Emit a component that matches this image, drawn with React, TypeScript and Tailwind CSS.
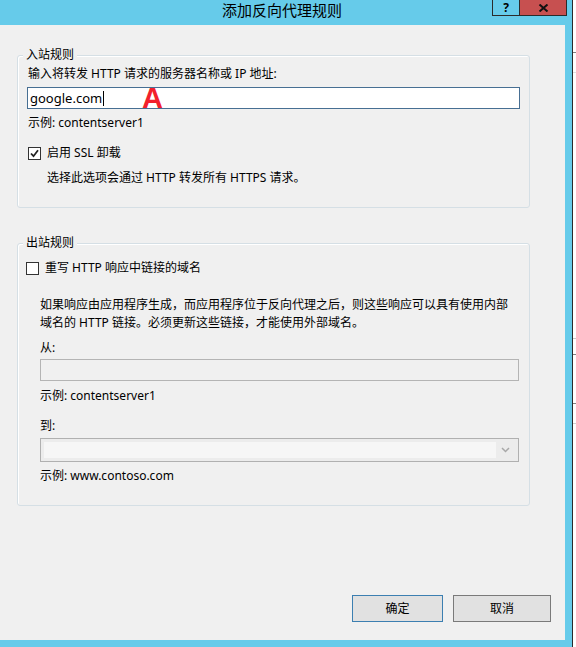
import React from "react";

const FONT = "font-['Segoe_UI','Noto_Sans','Noto_Sans_CJK_SC',sans-serif]";

function CheckBox({ checked = false }: { checked?: boolean }) {
  return (
    <span className="flex h-[13px] w-[13px] shrink-0 items-center justify-center border border-[#333333] bg-white">
      {checked && (
        <svg width="9" height="9" viewBox="0 0 9 9" aria-hidden>
          <path d="M1 4.5 L3.5 7.2 L8 1.2" fill="none" stroke="#222" strokeWidth="1.8" />
        </svg>
      )}
    </span>
  );
}

function GroupBox({
  title,
  className,
  children,
}: {
  title: string;
  className?: string;
  children: React.ReactNode;
}) {
  return (
    <div
      className={`relative ml-[17px] w-[513px] rounded-[3px] border border-[#d5dfe5] shadow-[inset_1px_1px_0_#ffffff] ${className ?? ""}`}
    >
      <span className="absolute -top-[9px] left-[5px] bg-[#f0f0f0] px-[3px] text-[12px] leading-[16px]">
        {title}
      </span>
      {children}
    </div>
  );
}

export default function App() {
  return (
    <div className={`relative flex h-[647px] w-[576px] overflow-hidden bg-white text-black ${FONT}`}>
      {/* dialog window */}
      <div className="flex h-full w-[572px] flex-col bg-[#66cbea]">
        <div className="relative flex h-[25px] items-center justify-center pb-[4px] pr-[8px] text-[15px]">
          添加反向代理规则
          <div className="absolute right-[5px] top-0 flex h-[16px] border border-t-0 border-[#2b2b2b]">
            <div className="flex w-[27px] items-center justify-center border-r border-[#2b2b2b] text-[12px] font-bold leading-none">
              ?
            </div>
            <div className="flex w-[46px] items-center justify-center bg-[#c75050]">
              <svg width="11" height="8" viewBox="0 0 11 8" aria-hidden>
                <path d="M1.5 0.5 L9.5 7.5 M9.5 0.5 L1.5 7.5" stroke="#111" strokeWidth="2" />
              </svg>
            </div>
          </div>
        </div>

        <div className="mb-[7px] mr-[7px] flex flex-1 flex-col bg-[#f0f0f0] text-[12px] leading-[16px]">
          {/* inbound rules */}
          <GroupBox title="入站规则" className="mt-[30px] pb-[21px] pl-[10px] pt-[10px]">
            <div>输入将转发 HTTP 请求的服务器名称或 IP 地址:</div>
            <div className="-ml-px mt-[5px] flex h-[22px] w-[493px] items-center border border-[#476f93] bg-white pl-[2px] text-[13px]">
              google.com
              <span className="ml-[1px] h-[15px] w-px bg-black" />
            </div>
            <div className="mt-[6px]">示例: contentserver1</div>
            <div className="mt-[14px] flex h-[16px] items-center gap-[6px]">
              <CheckBox checked />
              <span>启用 SSL 卸载</span>
            </div>
            <div className="ml-[19px] mt-[9px]">选择此选项会通过 HTTP 转发所有 HTTPS 请求。</div>
          </GroupBox>

          {/* outbound rules */}
          <GroupBox title="出站规则" className="mt-[35px] pb-[21px] pt-[16px]">
            <div className="ml-[8px] flex h-[16px] items-center gap-[6px]">
              <CheckBox />
              <span>重写 HTTP 响应中链接的域名</span>
            </div>
            <div className="pl-[22px]">
              <p className="mt-[20px] leading-[18px]">
                如果响应由应用程序生成，而应用程序位于反向代理之后，则这些响应可以具有使用内部
                <br />
                域名的 HTTP 链接。必须更新这些链接，才能使用外部域名。
              </p>
              <div className="mt-[8px]">从:</div>
              <div className="mt-[3px] h-[22px] w-[479px] border border-[#b4b4b4] bg-[#f0f0f0]" />
              <div className="mt-[7px]">示例: contentserver1</div>
              <div className="mt-[14px]">到:</div>
              <div className="mt-[4px] flex h-[24px] w-[479px] items-stretch border border-[#b0b0b0] bg-[#ececec] p-[3px]">
                <div className="flex-1 bg-[#f6f6f6]" />
                <div className="flex w-[19px] items-center justify-center">
                  <svg width="9" height="6" viewBox="0 0 9 6" aria-hidden>
                    <path d="M1 1 L4.5 4.5 L8 1" fill="none" stroke="#a8a8a8" strokeWidth="1.5" />
                  </svg>
                </div>
              </div>
              <div className="mt-[6px]">示例: www.contoso.com</div>
            </div>
          </GroupBox>

          <div className="flex-1" />

          <div className="mb-[18px] mr-[14px] flex justify-end gap-[10px]">
            <button className="h-[27px] w-[91px] border border-[#3c7fb1] bg-[#e1e1e1] text-[12px]">确定</button>
            <button className="h-[27px] w-[98px] border border-[#7a7a7a] bg-[#e1e1e1] text-[12px]">取消</button>
          </div>
        </div>
      </div>

      <div className="w-px bg-[#2b2b2b]" />

      {/* background window peeking out on the right */}
      <div className="relative flex-1 bg-white">
        <div className="absolute left-0 right-0 top-[52px] h-px bg-[#808080]" />
        <div className="absolute left-0 right-0 top-[72px] h-px bg-[#e0e0e0]" />
        <div className="absolute left-0 right-0 top-[338px] h-px bg-[#c8c8c8]" />
        <div className="absolute left-0 right-0 top-[354px] h-px bg-[#808080]" />
        <div className="absolute left-0 right-0 top-[403px] h-px bg-[#808080]" />
        <div className="absolute left-0 right-0 top-[423px] h-px bg-[#d0d0d0]" />
      </div>

      {/* red annotation */}
      <span className="absolute left-[142px] top-[84px] font-['Liberation_Sans',sans-serif] text-[29px] font-bold leading-[29px] text-[#f2202c]">
        A
      </span>
    </div>
  );
}
